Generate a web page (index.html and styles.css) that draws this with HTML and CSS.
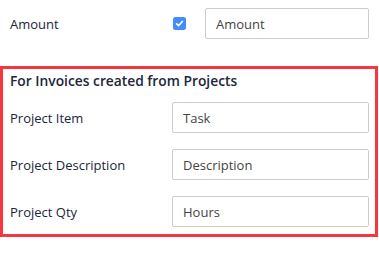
FILE: index.html
```html
<html>
	<head>
	<title>Custom Field Settings</title>
	<link rel="stylesheet" href="styles.css">
	</head>
	<body>
		<div class="field-row top-row">
			<div class="label top-label">Amount</div>
			<span class="check">
				<svg width="13" height="13" viewBox="0 0 13 13"><rect width="13" height="13" rx="2.5" fill="#408dfb"/><path d="M3.6 6.8 L5.6 8.7 L9.4 4.4" fill="none" stroke="#fff" stroke-width="1.6" stroke-linecap="round" stroke-linejoin="round"/></svg>
			</span>
			<input class="text-input top-input" type="text" value="Amount">
		</div>
		<div class="project-box">
			<div class="box-title">For Invoices created from Projects</div>
			<div class="field-row">
				<div class="label">Project Item</div>
				<input class="text-input" type="text" value="Task">
			</div>
			<div class="field-row">
				<div class="label">Project Description</div>
				<input class="text-input" type="text" value="Description">
			</div>
			<div class="field-row">
				<div class="label">Project Qty</div>
				<input class="text-input" type="text" value="Hours">
			</div>
		</div>
	</body>
</html>
```

FILE: styles.css
```css
body{
	margin:0;
	background-color:#ffffff;
	font-family:'Open Sans', 'Lato', sans-serif;
	font-size:13px;
	color:#21263c;
}
.field-row{
	display:flex;
	align-items:center;
}
.top-row{
	padding:8px 10px 0 10px;
}
.label{
	width:162px;
	flex-shrink:0;
}
.top-label{
	width:163px;
}
.check{
	width:13px;
	height:13px;
	margin-right:19px;
	display:flex;
}
.text-input{
	box-sizing:border-box;
	height:31px;
	width:197px;
	border:1px solid #cccccc;
	border-radius:2px;
	padding:0 10px;
	font-family:'Open Sans', 'Lato', sans-serif;
	font-size:13px;
	color:#444444;
	outline:none;
}
.top-input{
	width:164px;
}
.project-box{
	margin-top:27px;
	margin-right:1px;
	border:3px solid #f7363d;
	padding:2px 6px 7px 7px;
}
.box-title{
	font-weight:600;
	font-size:13.8px;
	line-height:20px;
	margin-bottom:11px;
}
.project-box .field-row + .field-row{
	margin-top:16px;
}
```
